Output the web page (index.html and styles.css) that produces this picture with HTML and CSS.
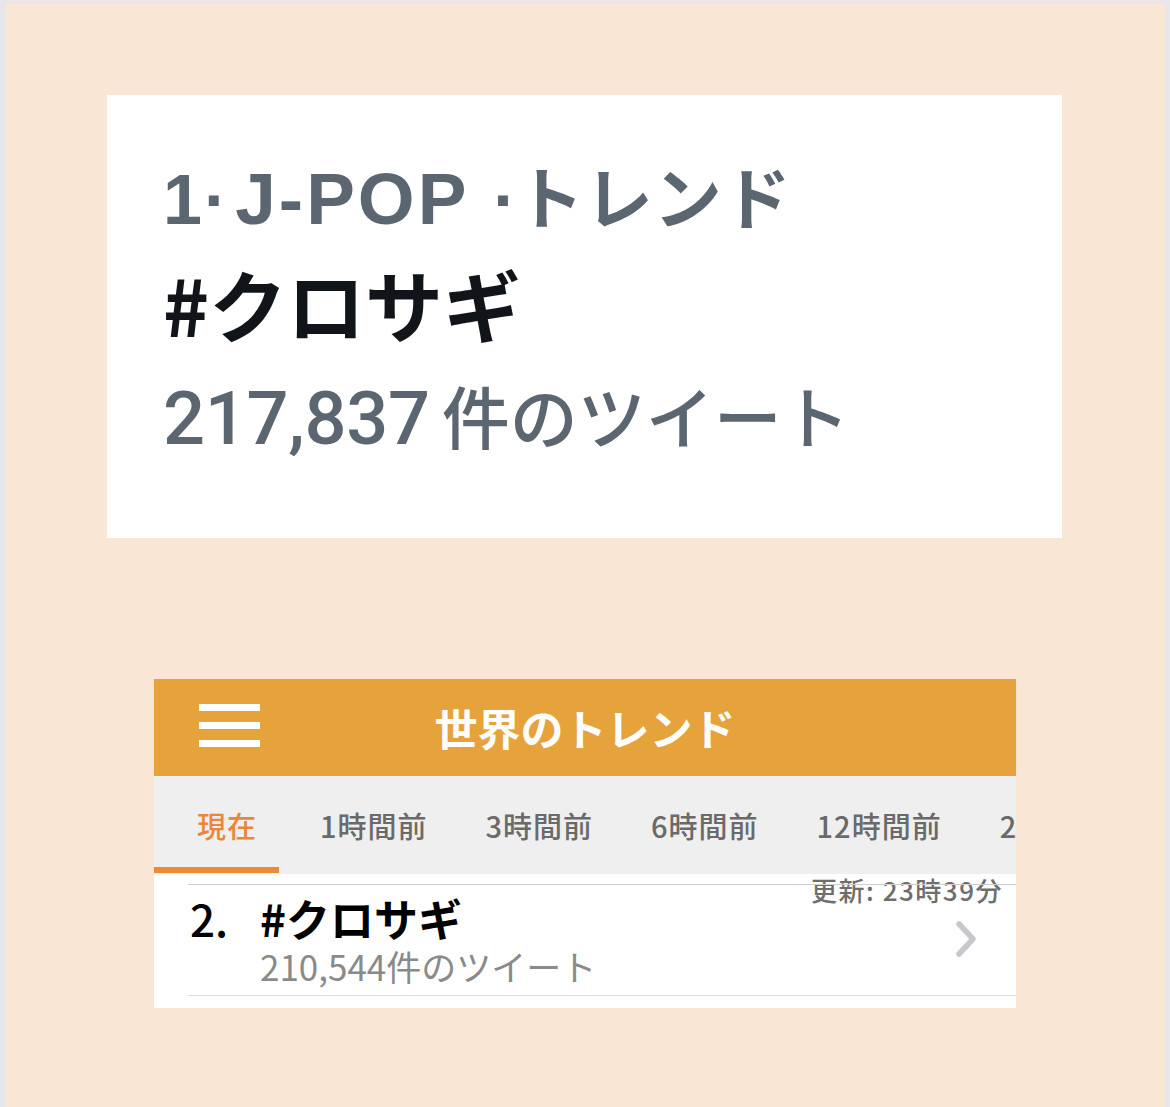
FILE: index.html
```html
<!DOCTYPE html>
<html lang="ja">
<head>
<meta charset="utf-8">
<link rel="stylesheet" href="styles.css">
</head>
<body>
<div class="page">
  <section class="card">
    <div class="meta">1<span class="dot1">·</span><span class="pop">J-POP</span><span class="dot2">·</span><span class="jp">トレンド</span></div>
    <div class="tag">#クロサギ</div>
    <div class="count">217,837<span class="jp">件のツイート</span></div>
  </section>

  <section class="panel">
    <header class="bar">
      <div class="burger"><span></span><span></span><span></span></div>
      <h1 class="title">世界のトレンド</h1>
    </header>
    <nav class="tabs">
      <div class="tab active">現在</div>
      <div class="tab">1時間前</div>
      <div class="tab">3時間前</div>
      <div class="tab">6時間前</div>
      <div class="tab">12時間前</div>
      <div class="tab">24時間前</div>
    </nav>
    <div class="list">
      <div class="updated">更新: 23時39分</div>
      <div class="row">
        <div class="rank">2.</div>
        <div class="info">
          <div class="name">#クロサギ</div>
          <div class="tweets">210,544件のツイート</div>
        </div>
        <svg class="chev" width="24" height="38" viewBox="0 0 24 38"><path d="M4 4 L18 19 L4 34" fill="none" stroke="#c8c8cc" stroke-width="5.5" stroke-linecap="round" stroke-linejoin="round"/></svg>
      </div>
    </div>
  </section>
</div>
</body>
</html>
```

FILE: styles.css
```css
html, body {
  margin: 0;
  padding: 0;
  background: #e8e6e8;
}
body {
  font-family: "Liberation Sans", "Noto Sans CJK JP", sans-serif;
}
.page {
  margin: 3px 5px 0 6px;
  height: 1104px;
  background: #f9e6d4;
  padding-top: 92px;
  box-sizing: border-box;
  overflow: hidden;
}
.card {
  margin-left: 101px;
  width: 955px;
  height: 443px;
  background: #fff;
  box-sizing: border-box;
  padding: 44px 0 0 56px;
}
.meta, .tag, .count {
  line-height: 112px;
  height: 112px;
  white-space: nowrap;
}
.meta {
  font-family: "Liberation Sans", "Noto Sans CJK JP", sans-serif;
  font-size: 70px;
  font-weight: 700;
  color: #5b6671;
}
.meta .pop {
  font-size: 73px;
  letter-spacing: 3px;
}
.meta .jp {
  font-family: "Noto Sans CJK JP", sans-serif;
  font-size: 68px;
  letter-spacing: 1px;
}
.dot1 { margin: 0 8px 0 2px; }
.dot2 { margin: 0 -1px 0 24px; }
.tag {
  font-size: 78px;
  font-weight: 700;
  color: #111418;
  font-family: "Noto Sans CJK JP", sans-serif;
  margin-top: -4px;
}
.count {
  font-family: "Roboto", "Liberation Sans", sans-serif;
  font-weight: 500;
  font-size: 74px;
  color: #5b6671;
  letter-spacing: -0.3px;
}
.count .jp {
  font-size: 68px;
  margin-left: 12px;
  font-weight: 500;
  letter-spacing: 0;
  font-family: "Noto Sans CJK JP", sans-serif;
}

.panel {
  margin: 141px 0 0 148px;
  width: 862px;
  background: #fff;
}
.bar {
  height: 97px;
  background: #e6a33c;
  position: relative;
  display: flex;
  align-items: center;
  justify-content: center;
}
.burger {
  position: absolute;
  left: 45px;
  top: 25px;
  width: 61px;
  display: flex;
  flex-direction: column;
  gap: 11px;
}
.burger span {
  display: block;
  height: 7px;
  background: #fff;
}
.title {
  margin: 0;
  color: #fff;
  font-family: "Noto Sans CJK JP", sans-serif;
  font-weight: 700;
  font-size: 43px;
  line-height: 97px;
}
.tabs {
  height: 98px;
  background: #efefef;
  display: flex;
  gap: 58px;
  overflow: hidden;
  white-space: nowrap;
  font-family: "Noto Sans CJK JP", sans-serif;
  font-size: 29px;
  font-weight: 500;
  letter-spacing: 1px;
  color: #6a6a6a;
  line-height: 98px;
}
.tab { flex: none; position: relative; }
.tab.active {
  width: 108px;
  padding-left: 43px;
  box-sizing: border-box;
  color: #e8873a;
}
.tab.active::after {
  content: "";
  position: absolute;
  left: 0;
  bottom: 1px;
  width: 125px;
  height: 6px;
  background: #ec8a37;
}
.list {
  position: relative;
  padding: 10px 0 12px 34px;
}
.updated {
  position: absolute;
  right: 13px;
  top: 1px;
  font-family: "Noto Sans CJK JP", sans-serif;
  font-size: 26px;
  font-weight: 500;
  letter-spacing: 1.5px;
  color: #6e6e6e;
  line-height: 30px;
}
.row {
  border-top: 1px solid #cfcfcf;
  border-bottom: 1px solid #dcdcdc;
  height: 110px;
  display: flex;
  align-items: flex-start;
  position: relative;
}
.rank {
  width: 70px;
  font-family: "Noto Sans CJK JP", sans-serif;
  font-size: 44px;
  font-weight: 500;
  color: #000;
  line-height: 48px;
  margin-top: 9px;
  padding-left: 2px;
}
.info { flex: 1; }
.name {
  font-family: "Noto Sans CJK JP", sans-serif;
  font-size: 44px;
  font-weight: 700;
  color: #000;
  line-height: 48px;
  margin-top: 9px;
}
.tweets {
  font-family: "Noto Sans CJK JP", sans-serif;
  font-size: 35px;
  color: #8a8a8a;
  line-height: 44px;
  margin-top: 2px;
}
.chev {
  margin: 35px 37px 0 0;
}
```
